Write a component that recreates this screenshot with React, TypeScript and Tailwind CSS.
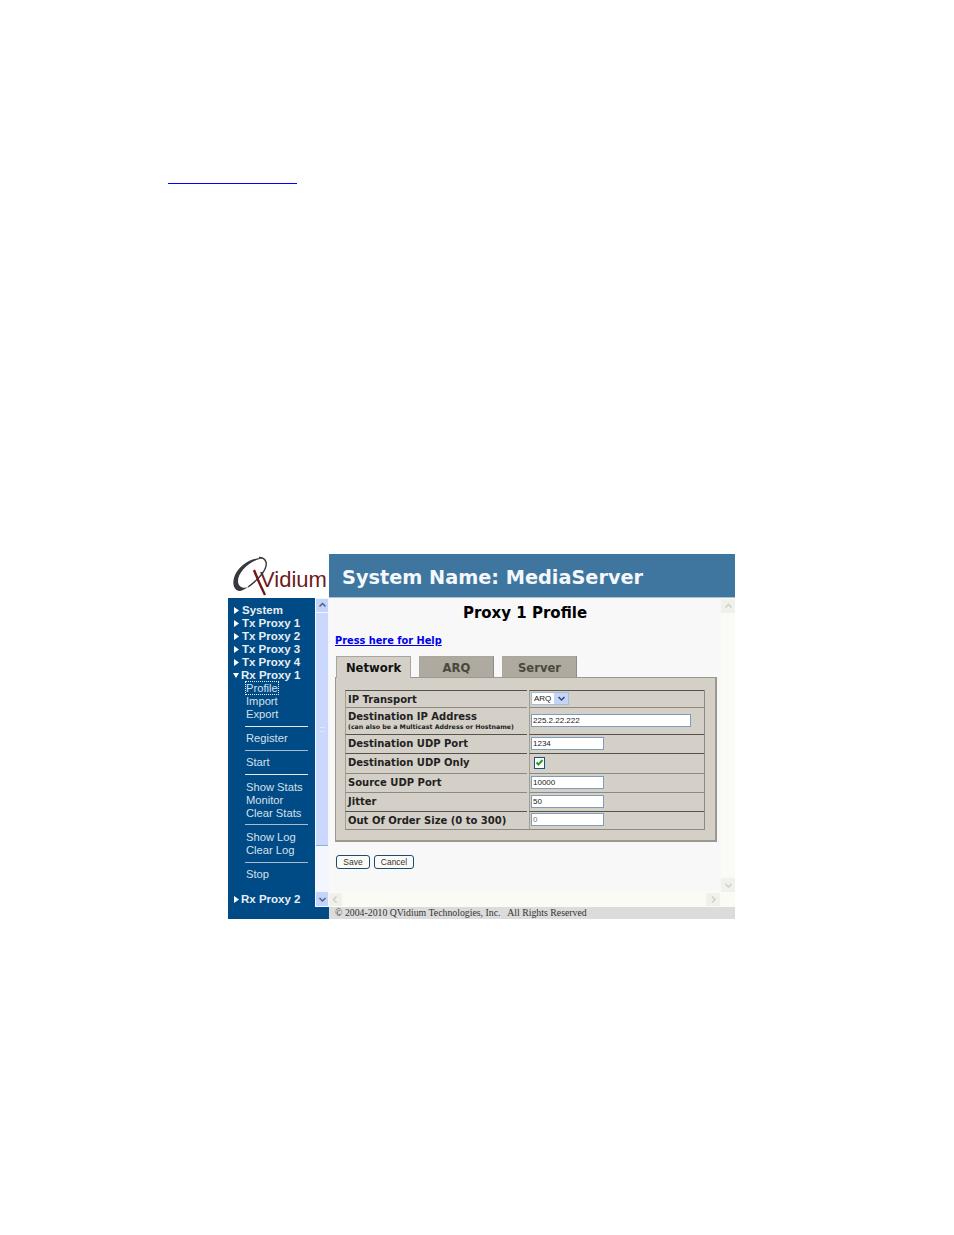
const sans = "font-['Liberation_Sans',Arial,sans-serif]";
const dj = "font-['DejaVu_Sans',Verdana,sans-serif]";

function Tri({ down = false }: { down?: boolean }) {
  return (
    <svg width="6" height="7" viewBox="0 0 6 7" className="shrink-0">
      {down ? <path d="M0 1h6L3 6z" fill="#fff" /> : <path d="M1 0l5 3.5L1 7z" fill="#fff" />}
    </svg>
  );
}

function Head({ label, rx = false, down = false }: { label: string; rx?: boolean; down?: boolean }) {
  return (
    <div className={`flex items-center h-[13px] pl-[5px] ${rx ? "gap-[2px]" : "gap-[3px]"}`}>
      <Tri down={down} />
      <span className="text-[11.5px] font-bold text-[#e8eef4] leading-[13px]">{label}</span>
    </div>
  );
}

function Sub({ label, focus = false }: { label: string; focus?: boolean }) {
  return (
    <div className="h-[13px] pl-[18px] leading-[13px] text-[11.2px] text-[#d5e0ea]">
      <span className={focus ? "outline-1 outline-dotted outline-[#e8eef4]" : ""}>{label}</span>
    </div>
  );
}

function Rule({ gray = false }: { gray?: boolean }) {
  return <div className={`ml-[17px] w-[63px] h-[1px] ${gray ? "bg-[#a9bccd]" : "bg-[#e4ebf1]"}`} />;
}

function Sidebar() {
  return (
    <div className={`w-[87px] h-full bg-[#004a85] pt-[6px] ${sans}`}>
      <Head label="System" />
      <Head label="Tx Proxy 1" />
      <Head label="Tx Proxy 2" />
      <Head label="Tx Proxy 3" />
      <Head label="Tx Proxy 4" />
      <Head label="Rx Proxy 1" rx down />
      <Sub label="Profile" focus />
      <Sub label="Import" />
      <Sub label="Export" />
      <div className="h-[5px]" />
      <Rule />
      <div className="h-[5px]" />
      <Sub label="Register" />
      <div className="h-[5px]" />
      <Rule gray />
      <div className="h-[5px]" />
      <Sub label="Start" />
      <div className="h-[5px]" />
      <Rule />
      <div className="h-[6px]" />
      <Sub label="Show Stats" />
      <Sub label="Monitor" />
      <Sub label="Clear Stats" />
      <div className="h-[4px]" />
      <Rule gray />
      <div className="h-[6px]" />
      <Sub label="Show Log" />
      <Sub label="Clear Log" />
      <div className="h-[5px]" />
      <Rule gray />
      <div className="h-[5px]" />
      <Sub label="Stop" />
      <div className="h-[12px]" />
      <Head label="Rx Proxy 2" rx />
    </div>
  );
}

function Chevron({ dir, color }: { dir: "up" | "down" | "left" | "right"; color: string }) {
  const d = {
    up: "M1.5 5.5L4.5 2.5L7.5 5.5",
    down: "M1.5 3L4.5 6L7.5 3",
    left: "M5.5 1.5L2.5 4.5L5.5 7.5",
    right: "M3 1.5L6 4.5L3 7.5",
  }[dir];
  return (
    <svg width="9" height="9" viewBox="0 0 9 9">
      <path d={d} fill="none" stroke={color} strokeWidth="1.5" />
    </svg>
  );
}

function LeftScroll() {
  return (
    <div className="w-[14px] bg-[#f4f6fd] flex flex-col pl-[1px] pr-[1px] pt-[1px] pb-[1px] gap-[1px]">
      <div className="h-[13px] bg-[#c3d3f9] flex items-center justify-center rounded-[1px]">
        <Chevron dir="up" color="#4d6185" />
      </div>
      <div className="h-[233px] bg-[#c9d8fc] border-b border-[#8fa8e8] flex items-center justify-center">
        <div className="w-[5px] h-[5px] border-y border-[#e2e9fc]" />
      </div>
      <div className="flex-1" />
      <div className="h-[14px] bg-[#c3d3f9] flex items-center justify-center rounded-[1px]">
        <Chevron dir="down" color="#4d6185" />
      </div>
    </div>
  );
}

function Tab({ label, active = false }: { label: string; active?: boolean }) {
  return (
    <div
      className={`w-[75px] flex items-center justify-center text-[11.6px] font-bold border-t border-l border-r border-t-[#a9a6a0] border-l-[#a9a6a0] ${
        active
          ? "h-[22px] mb-[-1px] pt-[3px] bg-[#d4d0c8] text-[#111] relative z-10 border-r-[#a9a6a0]"
          : "h-[21px] pt-[3px] bg-[#aeaa9f] text-[#4a4840] border-r-[#8f8b85]"
      }`}
    >
      {label}
    </div>
  );
}

function Row({
  h,
  label,
  sub,
  children,
  dark = true,
}: {
  h: string;
  label: string;
  sub?: string;
  children: React.ReactNode;
  dark?: boolean;
}) {
  const top = dark ? "border-t-[#55534e]" : "border-t-[#8b8983]";
  return (
    <div className={`flex gap-[2px] ${h}`}>
      <div className={`w-[182px] border-t border-l border-l-[#a09d96] ${top} pl-[2px] pt-[2px] text-[10px] font-bold leading-[13px] text-[#222] whitespace-nowrap`}>
        {label}
        {sub && <div className="text-[6.3px] leading-[7px] text-[#222]">{sub}</div>}
      </div>
      <div className={`flex-1 border-t border-l border-l-[#a09d96] ${top} pl-[1px] pb-[2px] flex items-center`}>{children}</div>
    </div>
  );
}

function Input({ w, value, gray = false }: { w: string; value: string; gray?: boolean }) {
  return (
    <div className={`${w} h-[13px] bg-white border border-[#7f9db9] pl-[1px] ${sans} text-[8px] leading-[11px] ${gray ? "text-[#777]" : "text-[#222]"}`}>
      {value}
    </div>
  );
}

function Main() {
  return (
    <div className="flex-1 bg-[#f8f8f8] flex flex-col min-w-0">
      <div className="h-[293px]">
        <h1 className="text-[15px] leading-[17px] font-bold text-black text-center pt-[7px] mb-[12px] box-content h-[17px]">Proxy 1 Profile</h1>
        <a className="block ml-[6px] text-[9.8px] leading-[13px] font-bold text-[#0000ee] underline">Press here for Help</a>
        <div className="flex gap-[8px] ml-[7px] mt-[9px]">
          <Tab label="Network" active />
          <Tab label="ARQ" />
          <Tab label="Server" />
        </div>
        <div className="ml-[6px] w-[382px] h-[165px] bg-[#d4d0c8] border border-[#9c9890] border-r-2 border-b-2 pl-[9px] pt-[12px]">
          <div className="w-[360px] h-[140px] border-r border-b border-[#8b8983] flex flex-col">
            <Row h="h-[17px]" label="IP Transport">
              <div className={`w-[38px] h-[13px] bg-white border border-[#a9bdd2] flex items-center justify-between pl-[2px] ${sans} text-[8px] leading-[11px] text-[#222]`}>
                ARQ
                <div className="w-[14px] h-[11px] bg-[#c4d4f8] flex items-center justify-center"><Chevron dir="down" color="#33476b" /></div>
              </div>
            </Row>
            <Row h="h-[27px]" label="Destination IP Address" sub="(can also be a Multicast Address or Hostname)" dark={false}>
              <Input w="w-[160px]" value="225.2.22.222" />
            </Row>
            <Row h="h-[19px]" label="Destination UDP Port">
              <Input w="w-[73px]" value="1234" />
            </Row>
            <Row h="h-[20px]" label="Destination UDP Only">
              <div className="w-[11px] h-[12px] ml-[3px] bg-white border border-[#1c5180] flex items-center justify-center">
                <svg width="9" height="9" viewBox="0 0 9 9"><path d="M1.5 4.5L3.5 6.5L7.5 2" fill="none" stroke="#21a121" strokeWidth="2" /></svg>
              </div>
            </Row>
            <Row h="h-[19px]" label="Source UDP Port" dark={false}>
              <Input w="w-[73px]" value="10000" />
            </Row>
            <Row h="h-[19px]" label="Jitter" dark={false}>
              <Input w="w-[73px]" value="50" />
            </Row>
            <Row h="flex-1" label="Out Of Order Size (0 to 300)">
              <Input w="w-[73px]" value="0" gray />
            </Row>
          </div>
        </div>
        <div className={`flex gap-[4px] ml-[7px] mt-[13px] ${sans} text-[8.5px] text-[#333]`}>
          <div className="w-[34px] h-[14px] bg-[#fbfbf8] border border-[#1c4a76] rounded-[3px] flex items-center justify-center">Save</div>
          <div className="w-[40px] h-[14px] bg-[#fbfbf8] border border-[#1c4a76] rounded-[3px] flex items-center justify-center">Cancel</div>
        </div>
      </div>
      <div className="flex-1 bg-[#fbfbf5] flex justify-between items-center pr-[1px]">
        <div className="w-[13px] h-[13px] bg-[#f1f1ec] flex items-center justify-center"><Chevron dir="left" color="#cfcfc8" /></div>
        <div className="w-[14px] h-[13px] bg-[#f1f1ec] flex items-center justify-center"><Chevron dir="right" color="#cfcfc8" /></div>
      </div>
    </div>
  );
}

function RightScroll() {
  return (
    <div className="w-[14px] bg-[#fbfbf5] flex flex-col">
      <div className="h-[14px] mt-[1px] bg-[#f1f1ec] flex items-center justify-center"><Chevron dir="up" color="#cfcfc8" /></div>
      <div className="flex-1" />
      <div className="h-[14px] bg-[#f1f1ec] flex items-center justify-center mb-[15px]"><Chevron dir="down" color="#cfcfc8" /></div>
    </div>
  );
}

function Logo() {
  return (
    <div className="relative h-[44px] bg-white overflow-hidden">
      <span className={`absolute left-[32px] top-[14px] text-[22px] leading-[24px] text-[#6e1a1c] ${sans}`}>Vidium</span>
      <svg width="101" height="44" viewBox="0 0 101 44" className="absolute left-0 top-0">
        <path d="M36 4C24 3 12 11 7 21C4 28 5 36 11 37C14 37 17 35 20 33C15 35 10 33 10 27C10 18 22 6 36 4Z" fill="#36383e" />
        <path d="M20 33C30 26 40 15 38 8C37 5 35 3.5 31 3.5" fill="none" stroke="#36383e" strokeWidth="1.4" />
        <path d="M26 16C29 24 33 33 37 41" fill="none" stroke="#6e1a1c" strokeWidth="2.4" />
      </svg>
    </div>
  );
}

export default function App() {
  return (
    <div className="w-[954px] h-[1235px] bg-white overflow-hidden">
      <div className="h-[183px]" />
      <div className="ml-[168px] w-[129px] h-[1px] bg-[#0000ff]" />
      <div className={`ml-[228px] mt-[370px] w-[507px] h-[365px] flex ${dj}`}>
        <div className="w-[101px] flex flex-col">
          <Logo />
          <div className="flex-1 flex min-h-0">
            <Sidebar />
            <div className="w-[14px] flex flex-col">
              <div className="h-[309px] flex">
                <LeftScroll />
              </div>
              <div className="flex-1 bg-[#004a85]" />
            </div>
          </div>
        </div>
        <div className="flex-1 flex flex-col min-w-0">
          <div className="h-[44px] bg-[#3f76a0] border-b border-[#a8c0d2] flex items-center pl-[13px] pt-[5px] text-[19.3px] font-bold text-[#f4f8fb]">System Name: MediaServer</div>
          <div className="h-[309px] flex">
            <Main />
            <RightScroll />
          </div>
          <div className="flex-1 bg-[#dcdcdc] pl-[6px] font-['Liberation_Serif',serif] text-[9.8px] leading-[12px] text-[#333] whitespace-pre">{"© 2004-2010 QVidium Technologies, Inc.   All Rights Reserved"}</div>
        </div>
      </div>
    </div>
  );
}
